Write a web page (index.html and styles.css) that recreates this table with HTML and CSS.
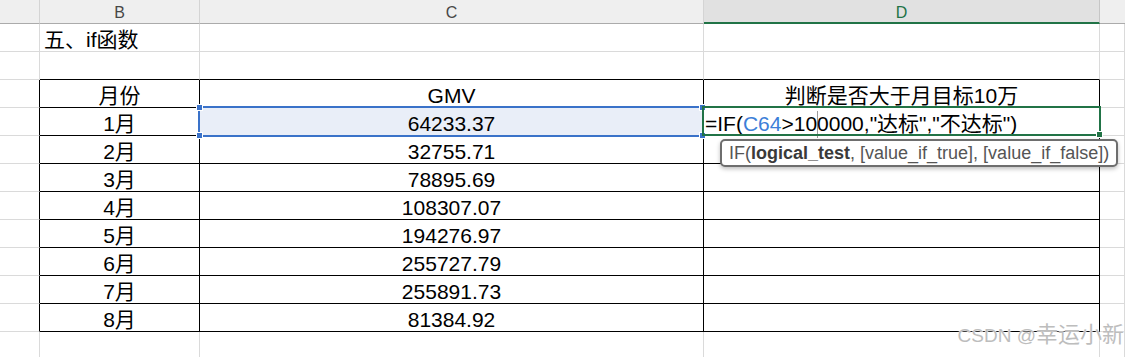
FILE: index.html
```html
<!DOCTYPE html>
<html lang="zh-CN">
<head>
    <meta charset="UTF-8">
    <title>IF函数</title>
    <link rel="stylesheet" href="styles.css">
</head>
<body>
    <div class="sheet">
        <!-- column headers -->
        <div class="hd"></div>
        <div class="hd">B</div>
        <div class="hd">C</div>
        <div class="hd hd-active">D</div>
        <div class="hd hd-last"></div>

        <!-- row: title -->
        <div class="cell"></div>
        <div class="cell title">五、if函数</div>
        <div class="cell"></div>
        <div class="cell"></div>
        <div class="cell"></div>

        <!-- row: blank, table top edge -->
        <div class="cell"></div>
        <div class="cell top"></div>
        <div class="cell top"></div>
        <div class="cell top"></div>
        <div class="cell"></div>

        <div class="cell edge"></div>
        <div class="cell tb">月份</div>
        <div class="cell tb">GMV</div>
        <div class="cell tb">判断是否大于月目标10万</div>
        <div class="cell"></div>

        <div class="cell edge"></div>
        <div class="cell tb">1月</div>
        <div class="cell tb selected">64233.37
            <div class="range">
                <span class="handle h-tl"></span>
                <span class="handle h-bl"></span>
                <span class="handle h-tr"></span>
                <span class="handle h-br"></span>
            </div>
        </div>
        <div class="cell tb editing">
            <span class="formula">=IF(<span class="ref">C64</span>&gt;10<span class="caret"></span>0000,"达标","不达标")</span>
            <div class="active-box"><span class="fill-handle"></span></div>
            <div class="tip">IF(<b>logical_test</b>, [value_if_true], [value_if_false])</div>
        </div>
        <div class="cell"></div>

        <div class="cell edge"></div>
        <div class="cell tb">2月</div>
        <div class="cell tb">32755.71</div>
        <div class="cell tb"></div>
        <div class="cell"></div>

        <div class="cell edge"></div>
        <div class="cell tb">3月</div>
        <div class="cell tb">78895.69</div>
        <div class="cell tb"></div>
        <div class="cell"></div>

        <div class="cell edge"></div>
        <div class="cell tb">4月</div>
        <div class="cell tb">108307.07</div>
        <div class="cell tb"></div>
        <div class="cell"></div>

        <div class="cell edge"></div>
        <div class="cell tb">5月</div>
        <div class="cell tb">194276.97</div>
        <div class="cell tb"></div>
        <div class="cell"></div>

        <div class="cell edge"></div>
        <div class="cell tb">6月</div>
        <div class="cell tb">255727.79</div>
        <div class="cell tb"></div>
        <div class="cell"></div>

        <div class="cell edge"></div>
        <div class="cell tb">7月</div>
        <div class="cell tb">255891.73</div>
        <div class="cell tb"></div>
        <div class="cell"></div>

        <div class="cell edge"></div>
        <div class="cell tb">8月</div>
        <div class="cell tb">81384.92</div>
        <div class="cell tb"></div>
        <div class="cell"></div>

        <!-- trailing empty row -->
        <div class="cell"></div>
        <div class="cell"></div>
        <div class="cell"></div>
        <div class="cell"></div>
        <div class="cell"></div>
    </div>
    <div class="watermark"><span class="wm-latin">CSDN @</span>幸运小新</div>
</body>
</html>
```

FILE: styles.css
```css
body {
    margin: 0;
    background: #fff;
    overflow: hidden;
    font-family: "Liberation Sans", "Noto Sans CJK SC", sans-serif;
    color: #000;
}
.sheet {
    display: grid;
    grid-template-columns: 40px 160px 504px 396px 1fr;
    grid-template-rows: 24px repeat(11, 28px) 28px;
    width: 1125px;
    height: 357px;
    position: relative;
}

/* column header strip */
.hd {
    background: #efefef;
    border-right: 1px solid #d4d4d4;
    border-bottom: 1px solid #ababab;
    text-align: center;
    font-size: 16px;
    line-height: 25px;
    color: #474747;
    box-sizing: border-box;
}
.hd-active {
    background: #e1e1e1;
    color: #217346;
    border-right-color: #c6c6c6;
    border-bottom: 2px solid #217346;
}
.hd-last {
    border-right: none;
}

/* cells */
.cell {
    box-sizing: border-box;
    border-right: 1px solid #dadada;
    border-bottom: 1px solid #dadada;
    font-size: 21px;
    line-height: 31px;
    white-space: nowrap;
    position: relative;
}
.title {
    padding-left: 4px;
    overflow: visible;
}
.top {
    border-bottom-color: #000;
}
.edge {
    border-right-color: #000;
}
.tb {
    border-right-color: #000;
    border-bottom-color: #000;
    text-align: center;
}

/* selected range C64 */
.selected {
    background: #e9eef8;
}
.range {
    position: absolute;
    top: -2px;
    left: -2px;
    right: -1px;
    bottom: -2px;
    border: 2px solid #3a72c9;
    z-index: 2;
}
.handle {
    position: absolute;
    width: 5px;
    height: 5px;
    background: #3a72c9;
    border: 1px solid #fff;
    z-index: 4;
}
.h-tl { top: -4px; left: -4px; }
.h-bl { bottom: -4px; left: -4px; }
.h-tr { top: -4px; right: -4px; }
.h-br { bottom: -4px; right: -4px; }

/* cell being edited */
.editing {
    text-align: left;
    padding-left: 1px;
    overflow: visible;
}
.formula .ref {
    color: #3d7fd8;
}
.caret {
    display: inline-block;
    width: 1px;
    height: 27px;
    background: #9a9a9a;
    vertical-align: -7px;
    margin-right: -1px;
}
.active-box {
    position: absolute;
    top: -2px;
    left: -2px;
    right: -2px;
    bottom: -1px;
    border: 2px solid #217346;
    z-index: 3;
}
.fill-handle {
    position: absolute;
    right: -4px;
    bottom: -4px;
    width: 5px;
    height: 5px;
    background: #217346;
    border: 1px solid #fff;
}
.tip {
    position: absolute;
    left: 16px;
    top: 31px;
    height: 28px;
    box-sizing: border-box;
    padding: 0 7px;
    background: #fff;
    border: 2px solid #6e6e6e;
    border-radius: 5px;
    box-shadow: 0 2px 4px rgba(0, 0, 0, 0.25);
    font-size: 18px;
    line-height: 24px;
    color: #555;
    z-index: 5;
}
.tip b {
    color: #3a3a3a;
}

.watermark {
    position: absolute;
    right: 1px;
    top: 322px;
    font-size: 22px;
    line-height: 26px;
    color: #bdbdbd;
    text-shadow: 0 0 2px #fff, 0 0 1px #fff;
    z-index: 6;
}
.wm-latin {
    font-size: 19px;
}
```
